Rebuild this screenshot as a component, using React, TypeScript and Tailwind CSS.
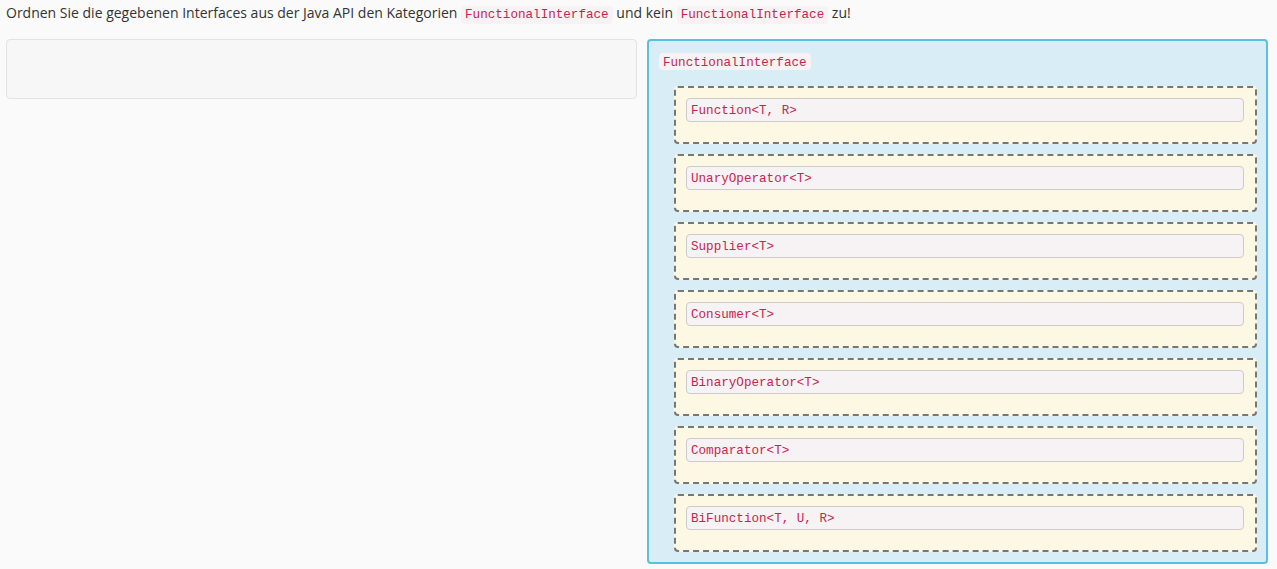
const items = [
  "Function<T, R>",
  "UnaryOperator<T>",
  "Supplier<T>",
  "Consumer<T>",
  "BinaryOperator<T>",
  "Comparator<T>",
  "BiFunction<T, U, R>",
];

const mono = "font-['Liberation_Mono','Courier_New',monospace]";

function Code({ children }: { children: string }) {
  return (
    <code
      className={`${mono} text-[12.6px] leading-[13px] text-[#c7254e] bg-[#f9f2f4] rounded-[4px] px-[4px] py-[2px]`}
    >
      {children}
    </code>
  );
}

export default function App() {
  return (
    <div className="min-h-screen bg-[#fafafa] px-[6px] pt-[3px] font-['Open_Sans',sans-serif] text-[14px] text-[#333]">
      <p className="leading-[20px] mb-[16px]">
        Ordnen Sie die gegebenen Interfaces aus der Java API den Kategorien{" "}
        <Code>FunctionalInterface</Code> und kein <Code>FunctionalInterface</Code> zu!
      </p>

      <div className="flex gap-[10px] items-start">
        {/* source bucket (empty) */}
        <div className="w-[631px] h-[60px] bg-[#f7f7f7] border border-[#e3e3e3] rounded-[4px]" />

        {/* target bucket */}
        <div className="w-[621px] border-2 border-[#5bc0de] bg-[#d9edf7] rounded-[4px] pt-[12px] pl-[10px] pr-[9px] pb-[10px]">
          <div className="flex mb-[16px]">
            <span
              className={`${mono} text-[12.6px] leading-[13px] text-[#c7254e] bg-[#f9f2f4] rounded-[4px] px-[4px] pt-[4px] pb-0`}
            >
              FunctionalInterface
            </span>
          </div>
          <div className="flex flex-col gap-[10px] ml-[15px]">
            {items.map((it) => (
              <div
                key={it}
                className="h-[58px] border-2 border-dashed border-[#777] bg-[#fcf8e3] rounded-[4px] p-[10px] pr-[11px]"
              >
                <div
                  className={`${mono} h-[24px] flex items-center border border-[#ccc] bg-[#f7f2f4] rounded-[4px] px-[4px] pt-[2px] text-[12.6px] text-[#c7254e]`}
                >
                  {it}
                </div>
              </div>
            ))}
          </div>
        </div>
      </div>
    </div>
  );
}
